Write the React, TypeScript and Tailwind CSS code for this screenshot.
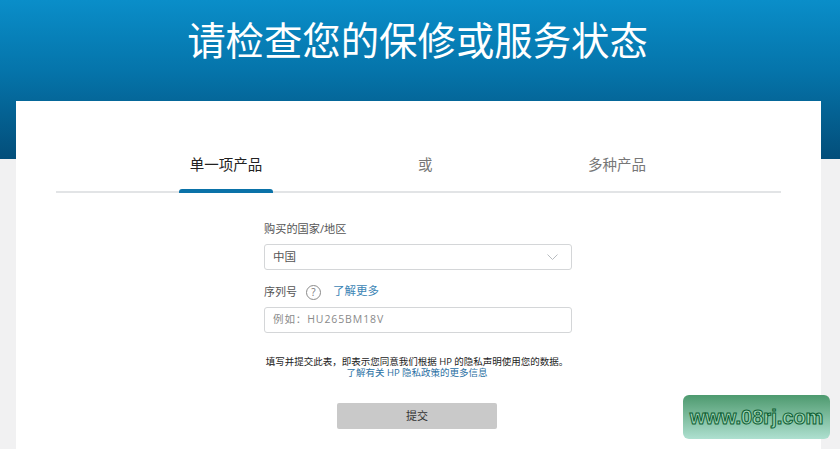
import React from 'react';

const fontStack = "font-['Open_Sans','Noto_Sans_CJK_SC',sans-serif]";

const App: React.FC = () => {
  return (
    <div className={`relative w-full h-[449px] overflow-hidden bg-[#f1f1f2] ${fontStack}`}>
      <header className="h-[159px] bg-gradient-to-b from-[#0a8ec9] via-[#0574aa] via-45% to-[#034e7a]">
        <h1 className="pt-[12px] pr-[5px] text-center text-[38.4px] leading-[56px] font-normal text-white">
          请检查您的保修或服务状态
        </h1>
      </header>

      <main className="mx-[16px] -mt-[58px] h-[348px] w-[805px] bg-white">
        <div className="mx-[40px] pt-[45px]">
          <div className="flex h-[47px] border-b-2 border-[#e2e4e6] text-[14.5px] leading-[38px]">
            <div className="relative ml-[123px] w-[94px] h-[47px] text-center text-[#222222]">
              单一项产品
              <div className="absolute bottom-0 left-0 h-[4px] w-full rounded-t-[3px] bg-[#0a72a8]" />
            </div>
            <div className="ml-[145px] w-[14px] text-center text-[#777777]">或</div>
            <div className="ml-[155px] w-[60px] text-center text-[#777777] whitespace-nowrap">多种产品</div>
          </div>
        </div>

        <form className="ml-[248px] mt-[28px] w-[308px]">
          <label className="block text-[11.2px] leading-[16px] text-[#555555]">购买的国家/地区</label>
          <div className="mt-[7px] flex h-[26px] items-center justify-between rounded-[3px] border border-[#d4d6d8] pl-[8px] pr-[13px] text-[11.5px] text-[#555555]">
            <span>中国</span>
            <svg width="11" height="6" viewBox="0 0 11 6" fill="none" stroke="#b8bcc0" strokeWidth="1">
              <path d="M0.5 0.5 L5.5 5.5 L10.5 0.5" />
            </svg>
          </div>

          <div className="mt-[13px] flex h-[18px] items-center text-[11px] text-[#555555]">
            <span>序列号</span>
            <span className="ml-[9px] flex h-[15px] w-[15px] items-center justify-center rounded-full border border-[#8a8a8a] text-[10px] leading-none text-[#777777]">?</span>
            <a className="ml-[12px] -mt-[3px] text-[11.5px] text-[#3c85b5]">了解更多</a>
          </div>
          <div className="mt-[6px] flex h-[26px] items-center rounded-[3px] border border-[#d4d6d8] pl-[8px] text-[10.5px] tracking-[0.9px] text-[#8a8a8a]">
            例如：HU265BM18V
          </div>

          <div className="mt-[23px] text-center text-[9.5px] leading-[11px] whitespace-nowrap pr-[2px]">
            <p className="text-[#222222]">填写并提交此表，即表示您同意我们根据 HP 的隐私声明使用您的数据。</p>
            <a className="text-[#2a70a3]">了解有关 HP 隐私政策的更多信息</a>
          </div>

          <div className="flex justify-center pr-[2px]">
            <button type="button" className="mt-[25px] h-[26px] w-[160px] rounded-[2px] bg-[#c9c9c9] text-[11px] text-[#333333]">
              提交
            </button>
          </div>
        </form>
      </main>

      {/* watermark lies over the page */}
      <div className="absolute left-[683px] top-[395px] flex h-[44px] w-[147px] items-center justify-center rounded-[6px] bg-gradient-to-b from-[#4d9a6f] to-[#aee0d0]">
        <span className="font-['Liberation_Sans',sans-serif] text-[20px] font-bold leading-none text-[#9fd4b4] [-webkit-text-stroke:1px_#0d5f34]">
          www.08rj.com
        </span>
      </div>
    </div>
  );
};

export default App;
